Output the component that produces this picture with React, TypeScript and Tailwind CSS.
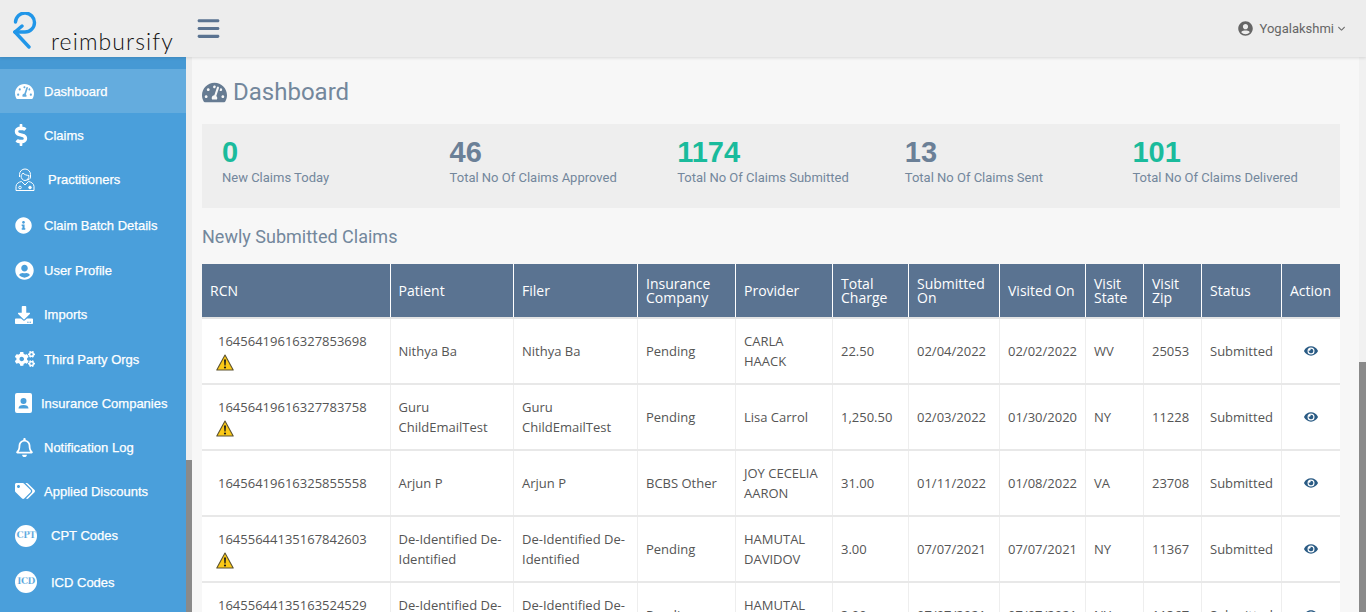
import {
  FaCogs,
  FaDollarSign,
  FaDownload,
  FaEye,
  FaInfoCircle,
  FaRegBell,
  FaTachometerAlt,
  FaTags,
  FaUserCircle,
} from 'react-icons/fa'
import { FaAngleDown, FaBars } from 'react-icons/fa6'
import type { ReactNode } from 'react'

const TextBadge = ({ label }: { label: string }) => (
  <span className="flex h-[22px] w-[22px] items-center justify-center rounded-full bg-white font-['DejaVu_Serif',serif] text-[9px] font-bold tracking-[-0.6px] text-[#4a9fdb]">
    {label}
  </span>
)

const Practitioner = () => (
  <svg viewBox="0 0 20 24" className="h-[24px] w-[20px]" fill="none" stroke="white" strokeWidth="1">
    <path d="M6 7.500c0 3 1.800 5 4 5s4-2 4-5c-2 0-5-1-6-2.500-.5 1-1.200 2-2 2.500z" />
    <path d="M4.500 9V6.500a5.500 5.500 0 0 1 11 0V9c0 2-2 3-4 3" />
    <path d="M1 22.500v-4c0-3 3-4.500 5.500-5L10 17l3.500-3.500c2.500.5 5.500 2 5.500 5v4z" />
    <circle cx="5" cy="19.500" r="1.300" />
    <circle cx="15" cy="19.500" r="1.300" fill="white" />
  </svg>
)

const Contact = () => (
  <svg viewBox="0 0 18 20" className="h-[20px] w-[18px]" fill="white">
    <path
      fillRule="evenodd"
      d="M2 0h13a2 2 0 0 1 2 2v16a2 2 0 0 1-2 2H2a2 2 0 0 1-2-2V2a2 2 0 0 1 2-2zm6.500 5a3 3 0 1 0 0 6 3 3 0 0 0 0-6zM3.500 15.500h10c0-2.500-2-3.500-5-3.500s-5 1-5 3.500z"
    />
  </svg>
)

const Warning = () => (
  <svg viewBox="0 0 18 17" className="h-[17px] w-[18px]">
    <path d="M9 1 17.200 16H.8z" fill="#fbc916" stroke="#5c5230" strokeWidth="1.100" strokeLinejoin="round" />
    <path d="M8 5.500h2l-.4 6H8.400z" fill="#1a1a1a" />
    <circle cx="9" cy="13.500" r="1.100" fill="#1a1a1a" />
  </svg>
)

type NavItem = { label: string; icon: ReactNode; rowH: string; iconW: string; active?: boolean }

const NAV: NavItem[] = [
  { label: 'Dashboard', icon: <FaTachometerAlt className="text-[19px]" />, rowH: 'h-[44px]', iconW: 'w-[29px]', active: true },
  { label: 'Claims', icon: <FaDollarSign className="-ml-[5px] text-[22px]" />, rowH: 'h-[44px]', iconW: 'w-[29px]' },
  { label: 'Practitioners', icon: <Practitioner />, rowH: 'h-[45px]', iconW: 'w-[33px]' },
  { label: 'Claim Batch Details', icon: <FaInfoCircle className="text-[17px]" />, rowH: 'h-[46px]', iconW: 'w-[29px]' },
  { label: 'User Profile', icon: <FaUserCircle className="text-[19px]" />, rowH: 'h-[44px]', iconW: 'w-[29px]' },
  { label: 'Imports', icon: <FaDownload className="text-[18px]" />, rowH: 'h-[45px]', iconW: 'w-[29px]' },
  { label: 'Third Party Orgs', icon: <FaCogs className="text-[20px]" />, rowH: 'h-[44px]', iconW: 'w-[29px]' },
  { label: 'Insurance Companies', icon: <Contact />, rowH: 'h-[44px]', iconW: 'w-[26px]' },
  { label: 'Notification Log', icon: <FaRegBell className="text-[19px]" />, rowH: 'h-[44px]', iconW: 'w-[29px]' },
  { label: 'Applied Discounts', icon: <FaTags className="text-[20px]" />, rowH: 'h-[44px]', iconW: 'w-[29px]' },
  { label: 'CPT Codes', icon: <TextBadge label="CPT" />, rowH: 'h-[45px]', iconW: 'w-[36px]' },
  { label: 'ICD Codes', icon: <TextBadge label="ICD" />, rowH: 'h-[48px]', iconW: 'w-[36px]' },
]

const STATS = [
  { value: '0', label: 'New Claims Today', green: true },
  { value: '46', label: 'Total No Of Claims Approved', green: false },
  { value: '1174', label: 'Total No Of Claims Submitted', green: true },
  { value: '13', label: 'Total No Of Claims Sent', green: false },
  { value: '101', label: 'Total No Of Claims Delivered', green: true },
]

const HEADERS = ['RCN', 'Patient', 'Filer', 'Insurance Company', 'Provider', 'Total Charge', 'Submitted On', 'Visited On', 'Visit State', 'Visit Zip', 'Status', 'Action']

const WIDTHS = [188, 123, 124, 98, 97, 76, 91, 86, 58, 58, 80, 59]

const ROWS = [
  { rcn: '16456419616327853698', warn: true, patient: 'Nithya Ba', filer: 'Nithya Ba', ins: 'Pending', prov: 'CARLA HAACK', charge: '22.50', sub: '02/04/2022', vis: '02/02/2022', st: 'WV', zip: '25053' },
  { rcn: '16456419616327783758', warn: true, patient: 'Guru ChildEmailTest', filer: 'Guru ChildEmailTest', ins: 'Pending', prov: 'Lisa Carrol', charge: '1,250.50', sub: '02/03/2022', vis: '01/30/2020', st: 'NY', zip: '11228' },
  { rcn: '16456419616325855558', warn: false, patient: 'Arjun P', filer: 'Arjun P', ins: 'BCBS Other', prov: 'JOY CECELIA AARON', charge: '31.00', sub: '01/11/2022', vis: '01/08/2022', st: 'VA', zip: '23708' },
  { rcn: '16455644135167842603', warn: true, patient: 'De-Identified De-Identified', filer: 'De-Identified De-Identified', ins: 'Pending', prov: 'HAMUTAL DAVIDOV', charge: '3.00', sub: '07/07/2021', vis: '07/07/2021', st: 'NY', zip: '11367' },
  { rcn: '16455644135163524529', warn: true, patient: 'De-Identified De-Identified', filer: 'De-Identified De-Identified', ins: 'Pending', prov: 'HAMUTAL DAVIDOV', charge: '3.00', sub: '07/07/2021', vis: '07/07/2021', st: 'NY', zip: '11367' },
]

const Logo = () => (
  <div className="flex w-[186px] shrink-0 items-start pl-[13px] pt-[12px]">
    <svg viewBox="0 0 24 38" className="h-[38px] w-[24px]" fill="none" stroke="#2196e8" strokeWidth="3.400" strokeLinecap="round" strokeLinejoin="round">
      <path d="M2.500 10A9.500 9.500 0 1 1 12 20H2" />
      <path d="M2 20 16 35" />
      <path d="M2 20l7-6" />
    </svg>
    <span className="ml-[14px] mt-[15px] font-['Lato',sans-serif] text-[23px] font-light leading-[28px] tracking-[1.1px] text-[#111]">reimbursify</span>
  </div>
)

export default function App() {
  return (
    <div className="flex h-[612px] w-[1366px] flex-col overflow-hidden bg-[#f7f7f7] font-['Open_Sans',sans-serif]">
      <header className="z-10 flex h-[57px] shrink-0 items-start bg-[#ededed] shadow-[0_1px_3px_rgba(0,0,0,0.12)]">
        <Logo />
        <FaBars className="ml-[10px] mt-[16px] text-[25px] text-[#5a7391]" />
        <div className="ml-auto mr-[20px] mt-[19px] flex items-center font-['Roboto',sans-serif] text-[13px] text-[#666]">
          <FaUserCircle className="ml-[1px] mr-[7px] text-[15px]" />
          Yogalakshmi
          <FaAngleDown className="ml-[3px] text-[9px]" />
        </div>
      </header>

      <div className="flex min-h-0 flex-1">
        <nav className="w-[186px] shrink-0 bg-[#4a9fdb] font-['Liberation_Sans',sans-serif] text-[13px] text-white [-webkit-text-stroke:0.25px_white]">
          <div className="h-[12px] bg-[#4699d4]" />
          {NAV.map(item => (
            <div key={item.label} className={`flex items-center pl-[15px] ${item.rowH} ${item.active ? 'bg-[#64acde]' : ''}`}>
              <span className={`flex shrink-0 ${item.iconW}`}>{item.icon}</span>
              <span className="whitespace-nowrap pt-[1px]">{item.label}</span>
            </div>
          ))}
        </nav>

        <div className="flex w-[6px] shrink-0 flex-col bg-[#eeeeee]">
          <div className="h-[403px] shrink-0" />
          <div className="flex-1 bg-[#8a8a8a]" />
        </div>

        <main className="min-w-0 flex-1 overflow-hidden pl-[10px] pr-[19px]">
          <h1 className="mt-[20px] flex h-[30px] items-center font-['Roboto',sans-serif] text-[24px] font-normal text-[#73879c]">
            <FaTachometerAlt className="mr-[6px] text-[25px] text-[#667b92]" />
            Dashboard
          </h1>

          <section className="mt-[17px] grid h-[84px] grid-cols-5 bg-[#eeeeee] pt-[12px]">
            {STATS.map(s => (
              <div key={s.label} className="pl-[20px]">
                <div className={`font-['Liberation_Sans',sans-serif] text-[29px] font-bold leading-[32px] ${s.green ? 'text-[#1abb9c]' : 'text-[#6b8097]'}`}>{s.value}</div>
                <div className="pt-[1px] font-['Roboto',sans-serif] text-[13px] leading-[18px] text-[#73879c]">{s.label}</div>
              </div>
            ))}
          </section>

          <h2 className="mt-[18px] font-['Roboto',sans-serif] text-[18px] font-normal leading-[22px] text-[#73879c]">Newly Submitted Claims</h2>

          <table className="mt-[16px] w-[1138px] table-fixed border-collapse text-[13px] text-[#555]">
            <colgroup>
              {WIDTHS.map((w, i) => (
                <col key={i} style={{ width: w }} />
              ))}
            </colgroup>
            <thead>
              <tr className="h-[54px] bg-[#5a7391] text-white">
                {HEADERS.map((h, i) => (
                  <th key={h} className={`border-x border-b-2 border-x-white border-b-[#e4e4e4] pr-[8px] text-left text-[14px] font-normal leading-[14px] first:border-l-0 last:border-r-0 ${i < 2 ? 'pl-[8px]' : 'pl-[8.5px]'}`}>
                    {h}
                  </th>
                ))}
              </tr>
            </thead>
            <tbody className="bg-white">
              {ROWS.map(r => (
                <tr key={r.rcn} className="h-[66px] border-b-2 border-[#e8e8e8] leading-[20px]">
                  <td className="border-r border-[#eeeeee] px-[16px]">
                    {r.rcn}
                    {r.warn && (
                      <div className="-ml-[2px] h-[20px] pt-[3px]">
                        <Warning />
                      </div>
                    )}
                  </td>
                  <td className="border-r border-[#eeeeee] px-[8px]">{r.patient}</td>
                  <td className="border-r border-[#eeeeee] pl-[8.5px] pr-[8px]">{r.filer}</td>
                  <td className="border-r border-[#eeeeee] pl-[8.5px] pr-[8px]">{r.ins}</td>
                  <td className="border-r border-[#eeeeee] pl-[8.5px] pr-[8px]">{r.prov}</td>
                  <td className="border-r border-[#eeeeee] pl-[8.5px] pr-[8px]">{r.charge}</td>
                  <td className="border-r border-[#eeeeee] pl-[8.5px] pr-[8px]">{r.sub}</td>
                  <td className="border-r border-[#eeeeee] pl-[8.5px] pr-[8px]">{r.vis}</td>
                  <td className="border-r border-[#eeeeee] pl-[8.5px] pr-[8px]">{r.st}</td>
                  <td className="border-r border-[#eeeeee] pl-[8.5px] pr-[8px]">{r.zip}</td>
                  <td className="border-r border-[#eeeeee] pl-[8.5px] pr-[8px]">Submitted</td>
                  <td className="px-[8px]">
                    <FaEye className="mx-auto text-[14px] text-[#2a5b84]" />
                  </td>
                </tr>
              ))}
            </tbody>
          </table>
        </main>

        <div className="flex w-[7px] shrink-0 flex-col bg-[#f1f1f1]">
          <div className="h-[305px] shrink-0" />
          <div className="flex-1 bg-[#8a8a8a]" />
        </div>
      </div>
    </div>
  )
}
